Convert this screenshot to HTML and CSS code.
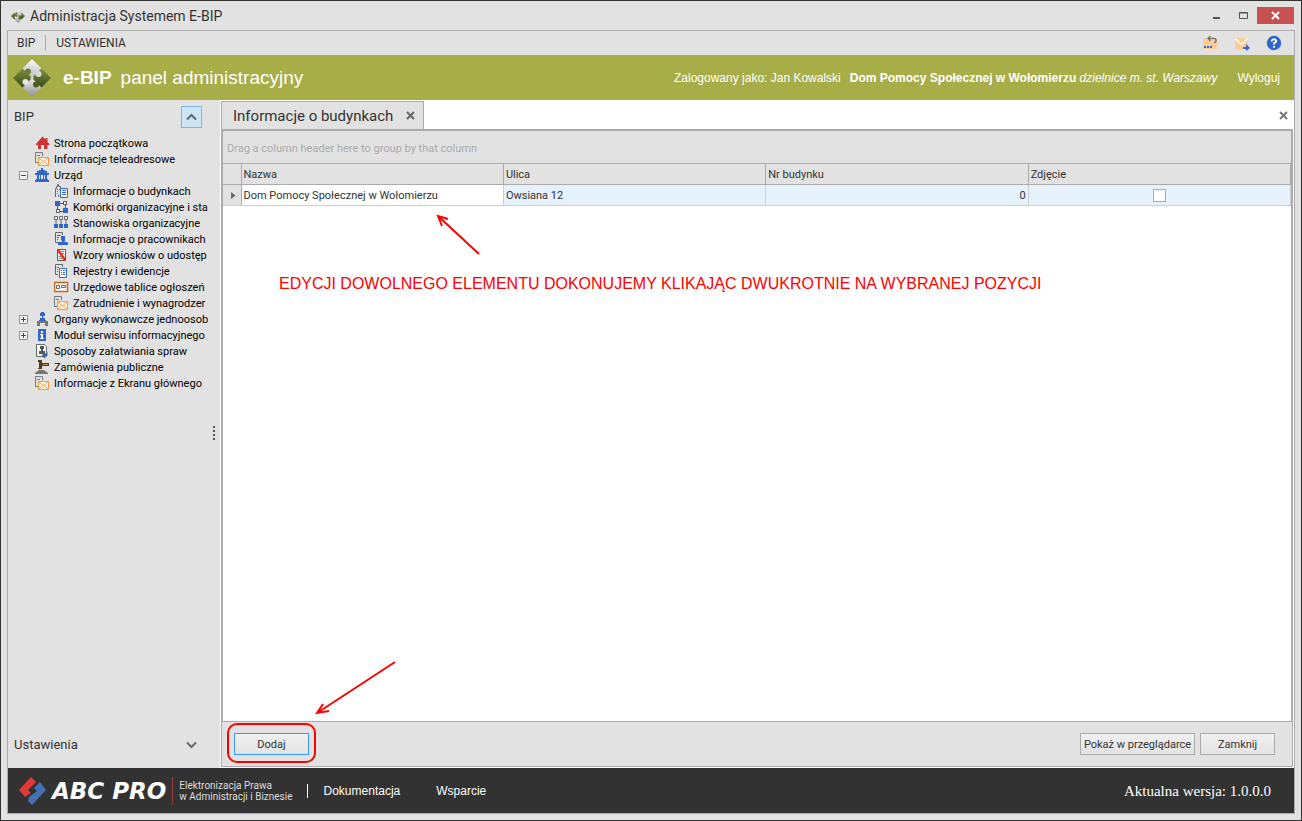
FILE: index.html
```html
<!DOCTYPE html>
<html lang="pl">
<head>
<meta charset="utf-8">
<title>Administracja Systemem E-BIP</title>
<link rel="stylesheet" href="styles.css">
</head>
<body>
<svg class="defs" width="0" height="0" aria-hidden="true">
  <linearGradient id="silver-top" x1="0" y1="0" x2="0" y2="1"><stop offset="0" stop-color="#f8f8f8"/><stop offset="1" stop-color="#bdbdbd"/></linearGradient>
  <linearGradient id="silver-low" x1="0" y1="0" x2="0" y2="1"><stop offset="0" stop-color="#eeeeee"/><stop offset="1" stop-color="#8f8f8f"/></linearGradient>
  <linearGradient id="moss" x1="0" y1="0" x2="0" y2="1"><stop offset="0" stop-color="#82923f"/><stop offset="1" stop-color="#36491c"/></linearGradient>
  <symbol id="puzzle" viewBox="0 0 38 38">
    <path d="M19 0l9.500 9.500L19 19 9.500 9.500z" fill="url(#silver-top)"/>
    <path d="M19 19l9.500 9.500L19 38l-9.500-9.500z" fill="url(#silver-low)"/>
    <path d="M0 19l9.500-9.500L19 19l-9.500 9.500z" fill="url(#moss)"/>
    <path d="M38 19l-9.500-9.500L19 19l9.500 9.500z" fill="url(#moss)"/>
    <circle cx="15" cy="12.500" r="3" fill="#6d7d33"/>
    <circle cx="25.500" cy="15" r="3" fill="#d9d9d9"/>
    <circle cx="23" cy="25.500" r="3" fill="#4a5d26"/>
    <circle cx="12.500" cy="23" r="3" fill="#e4e4e4"/>
    <path d="M17 19l2-2 2 2-2 2z" fill="#d0d0d0"/>
  </symbol>
  <symbol id="mail-doc" viewBox="0 0 16 16">
    <path d="M3 11.500H.5V1.500H7.500V5M2 4.500H5" fill="none" stroke="#777"/>
    <path d="M3.500 6.500h10v8h-10z" fill="#fff3df" stroke="#f79a3a"/>
    <path d="M4 7l4.500 4L13 7M4 14l3.500-3M13 14l-3.500-3" fill="none" stroke="#f79a3a"/>
  </symbol>
  <symbol id="house" viewBox="0 0 16 16">
    <path d="M7.500 1.500 10.500 4.500V3h2v4l2 2v1h-2v4H9v-4H6v4H3v-4H1V9z" fill="#cc3333"/>
  </symbol>
  <symbol id="office" viewBox="0 0 16 16">
    <path d="M6 1h2v2h2v1h2v2H2V4h2V3h2zM0 6h14v2H0zM2 8h2v4H2zM5 8h1v4H5zM8 8h1v4H8zM10 8h2v4h-2zM1 12h12v1h1v2H0v-2h1z" fill="#3366cc"/>
  </symbol>
  <symbol id="building" viewBox="0 0 16 16">
    <path d="M1.500 14V5.500h1v-2h1v-2h1v2h2v2M3 6.500h1M5 6.500h1M3 8.500h1M3 10.500h1M4.500 14v-2" fill="none" stroke="#666"/>
    <path d="M6.500 5.500h7v9h-7z" fill="#fff" stroke="#3366cc"/><path d="M8 7.500h4M8 9.500h4M8 11.500h4" stroke="#3366cc"/>
  </symbol>
  <symbol id="units" viewBox="0 0 16 16">
    <path d="M5 4.500h5M3.500 6v5M11.500 5v6M6 12.500h3" stroke="#555" fill="none"/>
    <path d="M1 2h5v5H1zM9 9h5v5H9z" fill="#3366cc"/>
    <path d="M9.500 2.500h3v3h-3zM2.500 10.500h3v3h-3z" fill="#fff" stroke="#555"/>
  </symbol>
  <symbol id="posts" viewBox="0 0 16 16">
    <path d="M2 5v6M7 5v6M12 5v6" stroke="#666"/>
    <path d="M.5 1.500h3v3h-3zM5.500 1.500h3v3h-3zM10.500 1.500h3v3h-3z" fill="#fff" stroke="#666"/>
    <path d="M0 9h4v4H0zM5 9h4v4H5zM10 9h4v4h-4z" fill="#3366cc"/>
  </symbol>
  <symbol id="staff" viewBox="0 0 16 16">
    <path d="M5 11.500H1.500v-10H8.500V4M3 4.500h4M3 6.500h2M3 8.500h1" fill="none" stroke="#666"/>
    <path d="M7 5h4v5l-1 1h3l1 1v2H4v-2l1-1h3V10L7 9z" fill="#3366cc"/>
  </symbol>
  <symbol id="form" viewBox="0 0 16 16">
    <path d="M3.500 2.500h8v11h-8z" fill="#fff" stroke="#555"/><path d="M5 11.500h3M7 4.500h3M8 6.500h2M5 9.500h2" stroke="#777"/>
    <path d="M4 3l7 10" stroke="#ee2a10" stroke-width="2.500"/>
  </symbol>
  <symbol id="register" viewBox="0 0 16 16">
    <path d="M4 11.500H1.500v-10H8.500V4M3 4.500h2M3 6.500h1M3 8.500h1" fill="none" stroke="#666"/>
    <path d="M5.500 5.500h7v9h-7z" fill="#fff" stroke="#3366cc"/><path d="M7 7.500h1M9 7.500h2M7 9.500h1M9 9.500h2M7 11.500h1M9 11.500h2" stroke="#3366cc"/>
  </symbol>
  <symbol id="board" viewBox="0 0 16 16">
    <path d="M.5 3.500h13v9h-13z" fill="#fff" stroke="#c8641e" stroke-width="1.500"/><path d="M2.500 6.500h3v3h-3zM7.500 6.500h4v2h-4z" fill="none" stroke="#666"/>
  </symbol>
  <symbol id="authority" viewBox="0 0 16 16">
    <path d="M6 1h3v1h1v3H8v2h2v2h1v1H4V9h1V7h2V5H5V2h1z" fill="#3366cc"/><path d="M2 10h11v5h-3v-3H5v3H2z" fill="#777"/>
  </symbol>
  <symbol id="info" viewBox="0 0 16 16">
    <path d="M3 2h8v12H3z" fill="#3366cc"/><path d="M6 4h2v2H6zM5 7h3v4h1v1H5v-1h1V8H5z" fill="#fff"/>
  </symbol>
  <symbol id="cases" viewBox="0 0 16 16">
    <path d="M8 13.500H1.500v-12h8l2 2V9" fill="#fff" stroke="#666"/>
    <path d="M5 3h4v3H8v2h2v3H4V8h2V6H5z" fill="#555"/><path d="M12 9v4h-3M10 10v5l-3-2.500z" fill="#336699" stroke="#336699"/>
  </symbol>
  <symbol id="gavel" viewBox="0 0 16 16">
    <path d="M3 1h4v2H7v1h7v3H7v3H3V9h1V3H3z" fill="#5b3a1c"/><path d="M8 5h5v1H8z" fill="#c79a55"/><path d="M4 11h5l4 3v1H0v-1z" fill="#777"/>
  </symbol>
</svg>

<div class="window">
  <header class="titlebar">
    <svg class="app-icon" width="14" height="14"><use href="#puzzle"/></svg>
    <h1 class="window-title">Administracja Systemem E-BIP</h1>
    <button class="caption-button" aria-label="Minimalizuj"><svg width="9" height="9"><path d="M1 7h7" stroke="#555" stroke-width="2"/></svg></button>
    <button class="caption-button" aria-label="Maksymalizuj"><svg width="9" height="9"><path d="M.5 1.500h8v6h-8z" fill="none" stroke="#555"/><path d="M0 2h9" stroke="#555"/></svg></button>
    <button class="caption-button caption-close" aria-label="Zamknij okno"><svg width="9" height="9"><path d="M1 1l7 7M8 1l-7 7" stroke="#fff" stroke-width="2"/></svg></button>
  </header>

  <div class="client">
    <nav class="menubar">
      <a class="menu-item" href="#bip">BIP</a>
      <a class="menu-item menu-next" href="#ustawienia">USTAWIENIA</a>
      <div class="menu-tools">
        <button class="tool" aria-label="Powrót"><svg width="16" height="16"><path d="M1 3h4v2h10v9H1z" fill="#ffcc99"/><path d="M2 11h2v2H2zM5 11h2v2H5zM8 11h2v2H8z" fill="#3366cc"/><path d="M6 3.500h6q2 0 2 2t-2 2M8.500 1L6 3.500 8.500 6" fill="none" stroke="#777" stroke-width="1.500"/></svg></button>
        <button class="tool" aria-label="Wyślij wiadomość"><svg width="16" height="16"><path d="M1 3h13v11H1z" fill="#ffcc99"/><path d="M1 3.500l6.500 6L14 3.500" fill="none" stroke="#fff" stroke-width="1.500"/><path d="M9 12h3V9l4 4-4 3v-2H9z" fill="#3366cc"/></svg></button>
        <button class="tool" aria-label="Pomoc"><svg width="16" height="16"><circle cx="8" cy="8" r="7.200" fill="#2d66cc"/><path d="M5.800 6.500V5.500L7 4.300h2l1.200 1.200v1.200L8 8.200V9.500M8 10.700v2" fill="none" stroke="#fff" stroke-width="1.800"/></svg></button>
      </div>
    </nav>

    <div class="banner">
      <svg class="banner-logo" width="38" height="38"><use href="#puzzle"/></svg>
      <p class="banner-title"><b>e-BIP</b><span>panel administracyjny</span></p>
      <p class="banner-user"><span>Zalogowany jako: Jan Kowalski</span><span><b>Dom Pomocy Społecznej w Wołomierzu</b> <i>dzielnice m. st. Warszawy</i></span></p>
      <a class="logout" href="#wyloguj">Wyloguj</a>
    </div>

    <div class="workspace">
      <aside class="sidebar">
        <div class="group-head">
          <span>BIP</span>
          <button class="group-toggle group-open" aria-label="Zwiń BIP"><svg width="11" height="8"><path d="M1 6.500l4.500-4.500 4.500 4.500" fill="none" stroke="#666" stroke-width="2"/></svg></button>
        </div>
        <ul class="tree">
          <li class="node"><svg class="icon"><use href="#house"/></svg><a href="#n1">Strona początkowa</a></li>
          <li class="node"><svg class="icon"><use href="#mail-doc"/></svg><a href="#n2">Informacje teleadresowe</a></li>
          <li class="node"><button class="expander" aria-label="Zwiń Urząd"><svg width="9" height="9"><path d="M.5.5h8v8h-8z" fill="#f4f4f4" stroke="#919191"/><path d="M2 4.500h5" stroke="#33508c"/></svg></button><svg class="icon"><use href="#office"/></svg><a href="#n3">Urząd</a></li>
          <li class="node child"><svg class="icon"><use href="#building"/></svg><a href="#n4">Informacje o budynkach</a></li>
          <li class="node child"><svg class="icon"><use href="#units"/></svg><a href="#n5">Komórki organizacyjne i sta</a></li>
          <li class="node child"><svg class="icon"><use href="#posts"/></svg><a href="#n6">Stanowiska organizacyjne</a></li>
          <li class="node child"><svg class="icon"><use href="#staff"/></svg><a href="#n7">Informacje o pracownikach</a></li>
          <li class="node child"><svg class="icon"><use href="#form"/></svg><a href="#n8">Wzory wniosków o udostęp</a></li>
          <li class="node child"><svg class="icon"><use href="#register"/></svg><a href="#n9">Rejestry i ewidencje</a></li>
          <li class="node child"><svg class="icon"><use href="#board"/></svg><a href="#n10">Urzędowe tablice ogłoszeń</a></li>
          <li class="node child"><svg class="icon"><use href="#mail-doc"/></svg><a href="#n11">Zatrudnienie i wynagrodzer</a></li>
          <li class="node"><button class="expander" aria-label="Rozwiń Organy wykonawcze"><svg width="9" height="9"><path d="M.5.5h8v8h-8z" fill="#f4f4f4" stroke="#919191"/><path d="M2 4.500h5M4.500 2v5" stroke="#33508c"/></svg></button><svg class="icon"><use href="#authority"/></svg><a href="#n12">Organy wykonawcze jednoosob</a></li>
          <li class="node"><button class="expander" aria-label="Rozwiń Moduł serwisu"><svg width="9" height="9"><path d="M.5.5h8v8h-8z" fill="#f4f4f4" stroke="#919191"/><path d="M2 4.500h5M4.500 2v5" stroke="#33508c"/></svg></button><svg class="icon"><use href="#info"/></svg><a href="#n13">Moduł serwisu informacyjnego</a></li>
          <li class="node"><svg class="icon"><use href="#cases"/></svg><a href="#n14">Sposoby załatwiania spraw</a></li>
          <li class="node"><svg class="icon"><use href="#gavel"/></svg><a href="#n15">Zamówienia publiczne</a></li>
          <li class="node"><svg class="icon"><use href="#mail-doc"/></svg><a href="#n16">Informacje z Ekranu głównego</a></li>
        </ul>
        <div class="group-head group-bottom">
          <span>Ustawienia</span>
          <button class="group-toggle" aria-label="Rozwiń Ustawienia"><svg width="11" height="8"><path d="M1 1.500l4.500 4.500L10 1.500" fill="none" stroke="#666" stroke-width="2"/></svg></button>
        </div>
        <svg class="grip" width="2" height="14"><path d="M0 0h2v2H0zM0 4h2v2H0zM0 8h2v2H0zM0 12h2v2H0z" fill="#555"/></svg>
      </aside>

      <main class="content">
        <div class="tabs">
          <div class="tab"><span>Informacje o budynkach</span><button class="tab-close" aria-label="Zamknij kartę"><svg width="9" height="9"><path d="M1 1l7 7M8 1l-7 7" stroke="#666" stroke-width="2"/></svg></button></div>
          <button class="tab-close" aria-label="Zamknij widok"><svg width="9" height="9"><path d="M1 1l7 7M8 1l-7 7" stroke="#777" stroke-width="2"/></svg></button>
        </div>
        <div class="panel">
          <div class="grid-area">
            <p class="group-panel">Drag a column header here to group by that column</p>
            <table class="grid">
              <colgroup><col class="col-mark"><col><col><col><col></colgroup>
              <thead><tr><th></th><th>Nazwa</th><th>Ulica</th><th>Nr budynku</th><th>Zdjęcie</th></tr></thead>
              <tbody><tr><td class="mark"><svg width="5" height="7"><path d="M0 0l4.500 3.500L0 7z" fill="#666"/></svg></td><td class="focused">Dom Pomocy Społecznej w Wołomierzu</td><td>Owsiana 12</td><td class="number">0</td><td class="check"><input type="checkbox" aria-label="Zdjęcie"></td></tr></tbody>
            </table>
            <div class="note">
              <svg class="note-arrow" width="44" height="41" viewBox="0 0 44 41"><path d="M43 40L2 2M12 5L2 2l4 10" fill="none" stroke="#f00" stroke-width="2"/></svg>
              <p class="note-text">EDYCJI DOWOLNEGO ELEMENTU DOKONUJEMY KLIKAJĄC DWUKROTNIE NA WYBRANEJ POZYCJI</p>
            </div>
          </div>
          <div class="actions">
            <div class="add-wrap">
              <button class="button primary">Dodaj</button>
              <svg class="add-arrow" width="82" height="55" viewBox="0 0 82 55"><path d="M80 1L2 52M8 43L2 52l12-2" fill="none" stroke="#f00" stroke-width="2"/></svg>
            </div>
            <button class="button preview">Pokaż w przeglądarce</button>
            <button class="button">Zamknij</button>
          </div>
        </div>
      </main>
    </div>

    <footer class="footer">
      <svg class="brand-mark" width="28" height="28" viewBox="0 0 28 28"><path d="M12 0l5 5-8 8 3 3-6 4-6-7z" fill="#dd3a38"/><path d="M21 5l6 8-14 15-4-4 1-4 8-6-3-3z" fill="#4470b8"/></svg>
      <span class="brand-name">ABC PRO</span>
      <p class="brand-tag">Elektronizacja Prawa<br>w Administracji i Biznesie</p>
      <a class="footer-link first-link" href="#dok">Dokumentacja</a>
      <a class="footer-link" href="#wsparcie">Wsparcie</a>
      <span class="version">Aktualna wersja: 1.0.0.0</span>
    </footer>
  </div>
</div>
</body>
</html>
```
FILE: styles.css
```css
* { box-sizing: border-box; }
body { margin: 0; background: #e2e2e2; color: #333; font: 11px/16px Roboto, "Noto Sans", sans-serif; }
p, h1, ul { margin: 0; padding: 0; }
a { color: inherit; text-decoration: none; }
button { margin: 0; padding: 0; border: 0; background: none; font: inherit; color: inherit; }
svg { display: block; flex: none; }
.defs { position: absolute; }

.window { display: flex; flex-direction: column; min-height: 100vh; padding: 0 6px 6px; border: 1px solid #333; }

.titlebar { display: flex; align-items: center; height: 29px; padding: 0 1px 0 4px; }
.window-title { flex: 1; margin-left: 5px; font-size: 14px; font-weight: 400; }
.caption-button { display: flex; align-items: center; justify-content: center; width: 27px; height: 17px; }
.caption-close { width: 37px; background: #c75050; }

.client { flex: 1; display: flex; flex-direction: column; border: 1px solid #ababab; }
.menubar { display: flex; align-items: center; height: 24px; padding: 0 12px 0 9px; font-size: 12px; }
.menu-next { margin-left: 10px; padding-left: 10px; border-left: 1px solid #ababab; }
.menu-tools { display: flex; gap: 16px; margin-left: auto; }

.banner { display: flex; align-items: center; height: 45px; padding: 0 14px 0 5px; background: #a7ae48; color: #fff; font-family: "Liberation Sans", sans-serif; font-size: 12px; }
.banner-title { display: flex; gap: 9px; margin-left: 12px; font-size: 19px; }
.banner-user { display: flex; gap: 9px; margin-left: auto; }
.logout { margin-left: 20px; }

.workspace { flex: 1; display: flex; }
.sidebar { position: relative; display: flex; flex-direction: column; width: 212px; }
.group-head { display: flex; align-items: center; justify-content: space-between; height: 34px; margin-bottom: 1px; padding: 0 18px 0 6px; font-size: 13px; }
.group-toggle { display: flex; align-items: center; justify-content: center; width: 21px; height: 22px; border: 1px solid transparent; }
.group-open { background: #cde6f7; border-color: #7eb4ea; }
.group-bottom { height: 46px; margin: auto 0 0; }
.tree { list-style: none; padding-left: 11px; color: #000; }
.node { display: flex; align-items: center; height: 16px; padding-left: 16px; white-space: nowrap; }
.node a { margin-left: 3px; padding-top: 2px; }
.child { padding-left: 35px; }
.icon { width: 16px; height: 16px; }
.expander { width: 9px; margin: 0 7px 0 -16px; }
.grip { position: absolute; right: 5px; top: 326px; }

.content { flex: 1; display: flex; flex-direction: column; min-width: 0; padding: 1px; background: #fff; }
.tabs { display: flex; align-items: center; justify-content: space-between; height: 28px; padding-right: 5px; }
.tab { display: flex; align-items: center; gap: 13px; height: 28px; padding: 0 8px 0 11px; border: 1px solid #ababab; border-bottom: 0; background: #e2e2e2; font-size: 15px; }
.panel { flex: 1; display: flex; flex-direction: column; border: 1px solid #ababab; background: #e2e2e2; }
.grid-area { flex: 1; border: 1px solid #ababab; background: #fff; }
.group-panel { height: 32px; padding: 10px 4px 6px; background: #e2e2e2; color: #ababab; }
.grid { width: 100%; border-collapse: collapse; table-layout: fixed; }
.col-mark { width: 18px; }
.grid th { height: 21px; padding: 2px 2px 0; border: 1px solid #ababab; border-left: 0; background: #e2e2e2; font-weight: 400; text-align: left; }
.grid td { height: 21px; padding: 2px 2px 0; border: 1px solid #cfcfcf; border-left: 0; background: #e5f1fb; }
.grid .mark { padding: 0 0 0 8px; background: #e2e2e2; border-right-color: #ababab; }
.grid .focused { background: #fff; }
.grid .number { text-align: right; }
.grid .check { padding: 0; text-align: center; }
.check input { appearance: none; display: block; width: 13px; height: 13px; margin: 0 auto; border: 1px solid #ababab; background: #fff; }

.note { width: 763px; margin: 8px 0 0 56px; color: #f00; font: 16px/20px "Liberation Sans", sans-serif; }
.note-arrow { margin-left: 157px; }
.note-text { margin-top: 19px; white-space: nowrap; }

.actions { display: flex; align-items: center; gap: 5px; height: 44px; padding: 0 17px 0 12px; }
.add-wrap { position: relative; margin-right: auto; }
.add-wrap::after { content: ""; position: absolute; inset: -10px -7px -8px -7px; border: 2px solid #f00; border-radius: 10px; pointer-events: none; }
.add-arrow { position: absolute; left: 81px; bottom: 39px; }
.button { width: 75px; height: 22px; padding-top: 2px; border: 1px solid #ababab; background: linear-gradient(#f0f0f0, #e3e3e3); white-space: nowrap; }
.primary { border-color: #3399ff; }
.preview { width: 115px; }

.footer { display: flex; align-items: center; height: 45px; padding: 0 23px 0 11px; background: #323232; color: #fff; font-family: "Liberation Sans", sans-serif; font-size: 12px; }
.brand-name { margin-left: 5px; font: italic bold 23px/28px "DejaVu Sans", sans-serif; }
.brand-tag { margin-left: 6px; padding: 3px 0 3px 6px; border-left: 1px solid #9c3a3a; font: 10px/11px Roboto, sans-serif; color: #ddd; }
.footer-link { margin-left: 36px; }
.first-link { margin-left: 14px; padding-left: 16px; border-left: 1px solid #fff; line-height: 14px; }
.version { margin-left: auto; font-family: "Liberation Serif", serif; font-size: 15px; }
```
